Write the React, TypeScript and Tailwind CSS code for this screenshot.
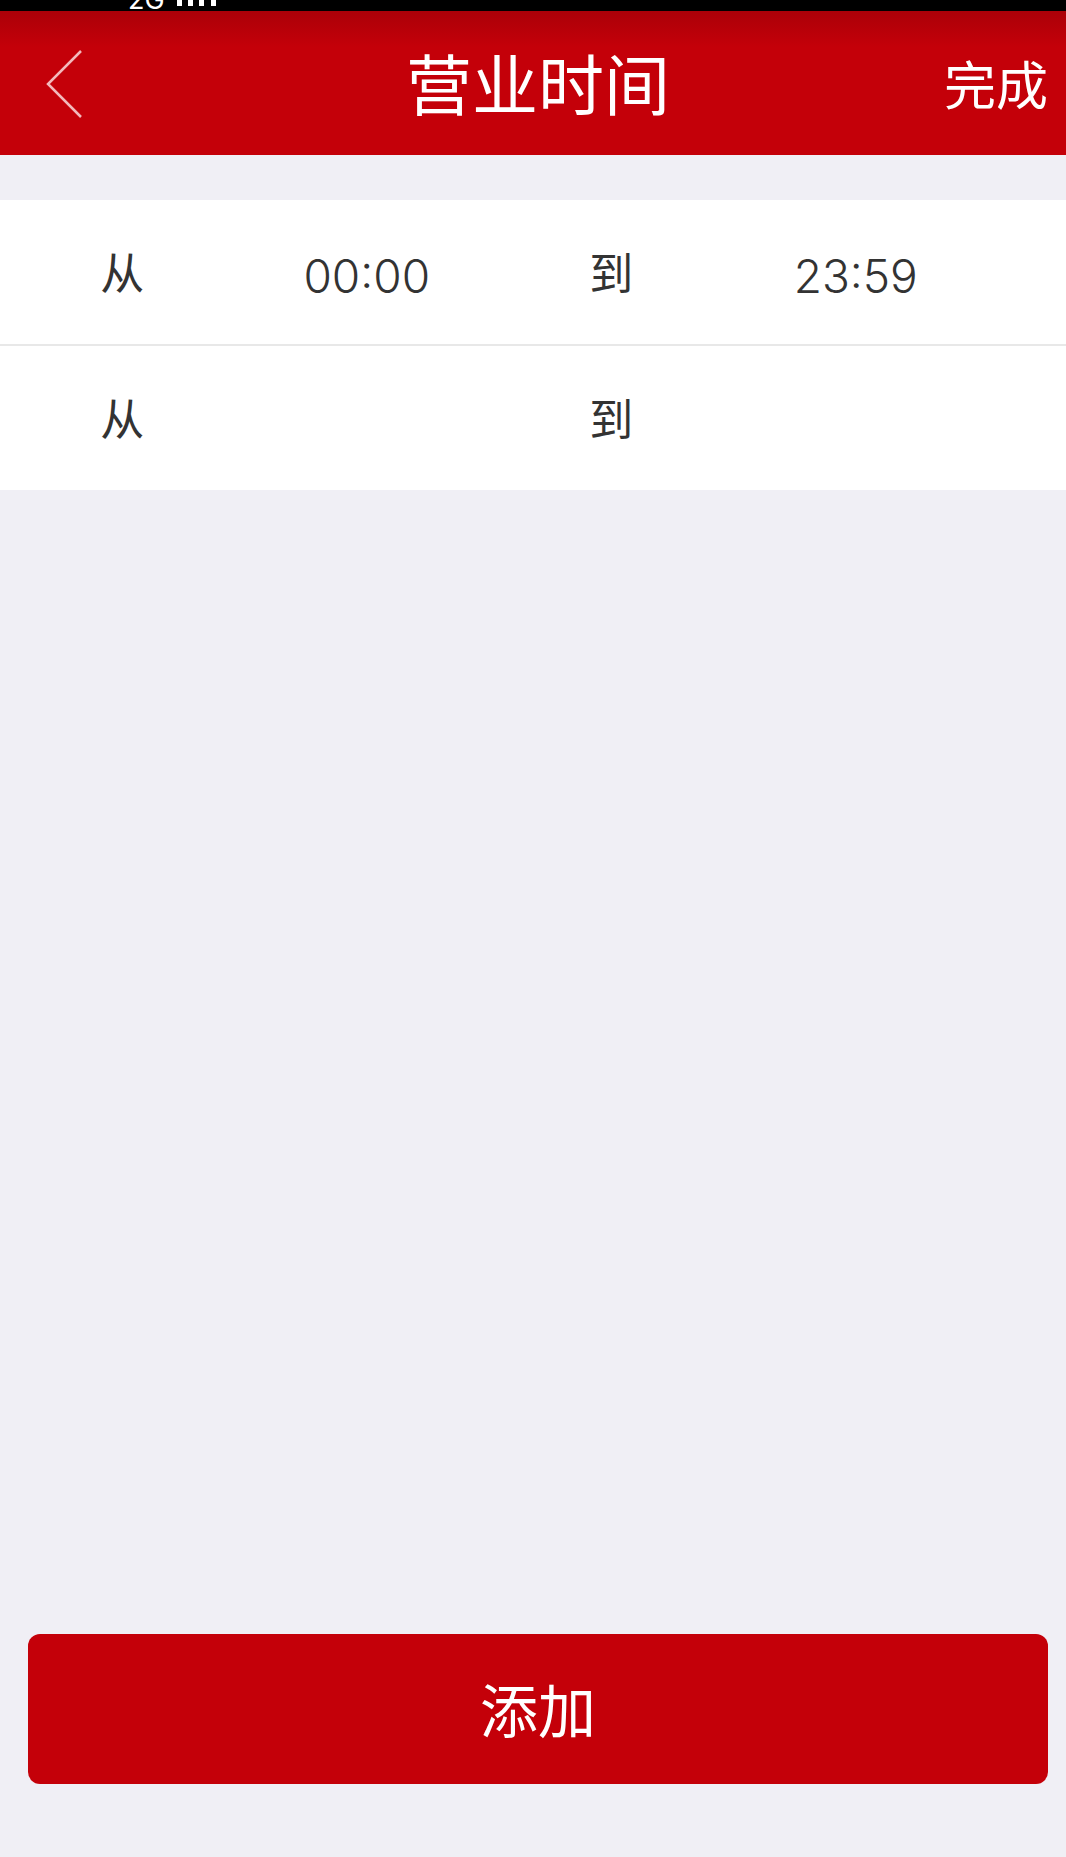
import { useState } from "react";

type Period = { from: string; to: string };

const timeInput =
  "h-full w-full min-w-0 bg-transparent pt-1 text-center text-[46px] font-[350] outline-none";
const rowLabel = "text-center text-[44px] leading-none";

function StatusBar() {
  return (
    <div className="flex h-[11px] items-end gap-3 overflow-hidden bg-black pl-32 text-white">
      <span className="h-[25px] text-[27px] leading-none">2G</span>
      <svg width="41" height="11" viewBox="0 0 41 11" fill="currentColor" aria-hidden="true">
        <rect x="0" y="0" width="5" height="6" />
        <rect x="11" y="0" width="5" height="6" />
        <rect x="22" y="0" width="5" height="6" />
        <rect x="34" y="0" width="5" height="6" />
      </svg>
    </div>
  );
}

function PeriodRow({ period, index, onChange }: { period: Period; index: number; onChange: (p: Period) => void }) {
  return (
    <div className="box-content h-36">
      <div className="grid h-full grid-cols-4 items-center pt-1 pr-[88px]">
        <label htmlFor={`from-${index}`} className={rowLabel}>从</label>
        <input
          id={`from-${index}`}
          type="text"
          className={timeInput}
          value={period.from}
          onChange={(e) => onChange({ ...period, from: e.target.value })}
        />
        <label htmlFor={`to-${index}`} className={rowLabel}>到</label>
        <input
          id={`to-${index}`}
          type="text"
          className={timeInput}
          value={period.to}
          onChange={(e) => onChange({ ...period, to: e.target.value })}
        />
      </div>
    </div>
  );
}

export default function App() {
  const [periods, setPeriods] = useState<Period[]>([
    { from: "00:00", to: "23:59" },
    { from: "", to: "" },
  ]);

  return (
    <div className="flex min-h-screen flex-col bg-[#f0eff5] font-['Inter','Noto_Sans_CJK_SC',sans-serif] text-[#333]">
      <StatusBar />
      <header className="grid h-36 grid-cols-[1fr_auto_1fr] items-center bg-[#c40009] bg-linear-to-b from-[#ab0008] to-[#c40009] to-25% pt-0.5 pr-[18px] pl-7 text-white">
        <button type="button" aria-label="返回" className="justify-self-start px-4 py-3">
          <svg width="40" height="70" viewBox="0 0 40 70" fill="none" stroke="#f3b9bc" strokeWidth="2.5" aria-hidden="true">
            <path d="M37 2 L4 35 L37 68" />
          </svg>
        </button>
        <h1 className="pt-1 text-[66px] leading-none font-normal">营业时间</h1>
        <button type="button" className="justify-self-end pt-1.5 text-[52px] leading-none font-normal">
          完成
        </button>
      </header>
      <main className="flex grow flex-col pt-[45px]">
        <div className="divide-y-2 divide-[#e8e8e8] bg-white">
          {periods.map((period, i) => (
            <PeriodRow
              key={i}
              index={i}
              period={period}
              onChange={(next) => setPeriods(periods.map((p, j) => (j === i ? next : p)))}
            />
          ))}
        </div>
        <div className="mt-auto pr-[18px] pb-[73px] pl-7">
          <button
            type="button"
            className="h-[150px] w-full rounded-xl bg-[#c40009] pt-1.5 text-[58px] leading-none font-normal text-white"
            onClick={() => setPeriods([...periods, { from: "", to: "" }])}
          >
            添加
          </button>
        </div>
      </main>
    </div>
  );
}
